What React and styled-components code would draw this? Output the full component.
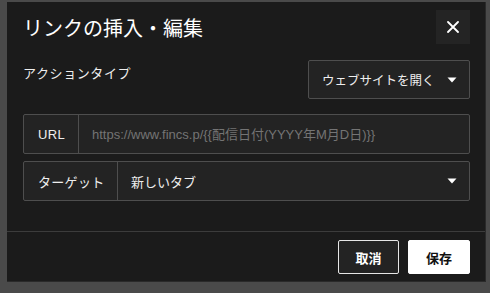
import React, { useState } from "react";
import styled, { createGlobalStyle } from "styled-components";

const GlobalStyle = createGlobalStyle`
  html, body {
    margin: 0;
    padding: 0;
    background: #4a4a4a;
  }
  body {
    font-family: "Liberation Sans", "Noto Sans CJK JP", sans-serif;
    -webkit-font-smoothing: antialiased;
  }
`;

const Dialog = styled.div`
  margin: 2px 0 0 7px;
  width: 479px;
  height: 280px;
  box-sizing: border-box;
  background: #1b1b1b;
  border: 1px solid #2a2a2a;
  border-left: none;
  border-top: none;
  display: flex;
  flex-direction: column;
  color: #eee;
`;

const Header = styled.div`
  display: flex;
  align-items: center;
  justify-content: space-between;
  padding: 8px 15px 0 16px;
`;

const Title = styled.h2`
  margin: 0;
  font-size: 20px;
  font-weight: 400;
  color: #fff;
`;

const CloseButton = styled.button`
  width: 34px;
  height: 34px;
  border: none;
  background: #242424;
  color: #fff;
  display: flex;
  align-items: center;
  justify-content: center;
  padding: 0;
  cursor: pointer;
`;

const Body = styled.div`
  padding: 16px 15px 30px 16px;
  display: flex;
  flex-direction: column;
`;

const ActionRow = styled.div`
  display: flex;
  justify-content: space-between;
  align-items: flex-start;
  margin-bottom: 15px;
`;

const Label = styled.div`
  font-size: 13px;
  letter-spacing: 0.6px;
  margin-top: 3px;
  font-family: "Noto Sans CJK JP", sans-serif;
`;

const SelectButton = styled.button`
  height: 39px;
  box-sizing: border-box;
  width: 162px;
  background: #232323;
  border: 1px solid #4e4e4e;
  border-radius: 2px;
  color: #eee;
  font-family: "Noto Sans CJK JP", sans-serif;
  font-size: 12.5px;
  display: flex;
  align-items: center;
  justify-content: space-between;
  padding: 0 12px 0 13px;
`;

const Field = styled.div`
  display: flex;
  height: 40px;
  box-sizing: border-box;
  border: 1px solid #4e4e4e;
  border-radius: 2px;
  background: #232323;
  margin-bottom: ${(p) => p.$gap || 0}px;
`;

const FieldLabel = styled.div`
  width: ${(p) => p.$width}px;
  box-sizing: border-box;
  flex-shrink: 0;
  display: flex;
  align-items: center;
  padding-left: 14px;
  border-right: 1px solid #4e4e4e;
  font-size: 13px;
  font-family: ${(p) => (p.$latin ? '"Liberation Sans", sans-serif' : '"Noto Sans CJK JP", sans-serif')};
  color: #eee;
  letter-spacing: 0.3px;
`;

const Input = styled.input`
  flex: 1;
  background: transparent;
  border: none;
  outline: none;
  padding: 0 13px;
  font-family: "Liberation Sans", "Noto Sans CJK JP", sans-serif;
  font-size: 13px;
  color: #eee;
  &::placeholder {
    color: #747474;
  }
`;

const FieldValue = styled.div`
  flex: 1;
  display: flex;
  align-items: center;
  justify-content: space-between;
  padding: 0 12px 0 13px;
  font-family: "Noto Sans CJK JP", sans-serif;
  font-size: 13px;
  color: #eee;
`;

const Divider = styled.div`
  height: 1px;
  background: #3c3c3c;
`;

const Footer = styled.div`
  display: flex;
  justify-content: flex-end;
  gap: 9px;
  padding: 8px 15px 0 16px;
`;

const Button = styled.button`
  height: 34px;
  width: ${(p) => (p.$primary ? 62 : 61)}px;
  box-sizing: border-box;
  border-radius: 2px;
  border: 1px solid ${(p) => (p.$primary ? "#fff" : "#e6e6e6")};
  background: ${(p) => (p.$primary ? "#fff" : "#232323")};
  color: ${(p) => (p.$primary ? "#111" : "#fff")};
  font-family: "Noto Sans CJK JP", sans-serif;
  font-weight: 700;
  font-size: 13px;
  cursor: pointer;
`;

function Caret() {
  return (
    <svg width="10" height="6" viewBox="0 0 10 6">
      <path d="M0.5 0.5 H9.5 L5 5.5 Z" fill="#fff" />
    </svg>
  );
}

function CloseIcon() {
  return (
    <svg width="12" height="12" viewBox="0 0 12 12">
      <path d="M1 1 L11 11 M11 1 L1 11" stroke="#fff" strokeWidth="1.8" strokeLinecap="round" />
    </svg>
  );
}

export default function App() {
  const [url, setUrl] = useState("");

  return (
    <>
      <GlobalStyle />
      <Dialog>
        <Header>
          <Title>リンクの挿入・編集</Title>
          <CloseButton>
            <CloseIcon />
          </CloseButton>
        </Header>
        <Body>
          <ActionRow>
            <Label>アクションタイプ</Label>
            <SelectButton>
              ウェブサイトを開く
              <Caret />
            </SelectButton>
          </ActionRow>
          <Field $gap={7}>
            <FieldLabel $width={55} $latin>URL</FieldLabel>
            <Input
              value={url}
              onChange={(e) => setUrl(e.target.value)}
              placeholder="https://www.fincs.p/{{配信日付(YYYY年M月D日)}}"
            />
          </Field>
          <Field>
            <FieldLabel $width={94}>ターゲット</FieldLabel>
            <FieldValue>
              新しいタブ
              <Caret />
            </FieldValue>
          </Field>
        </Body>
        <Divider />
        <Footer>
          <Button>取消</Button>
          <Button $primary>保存</Button>
        </Footer>
      </Dialog>
    </>
  );
}
